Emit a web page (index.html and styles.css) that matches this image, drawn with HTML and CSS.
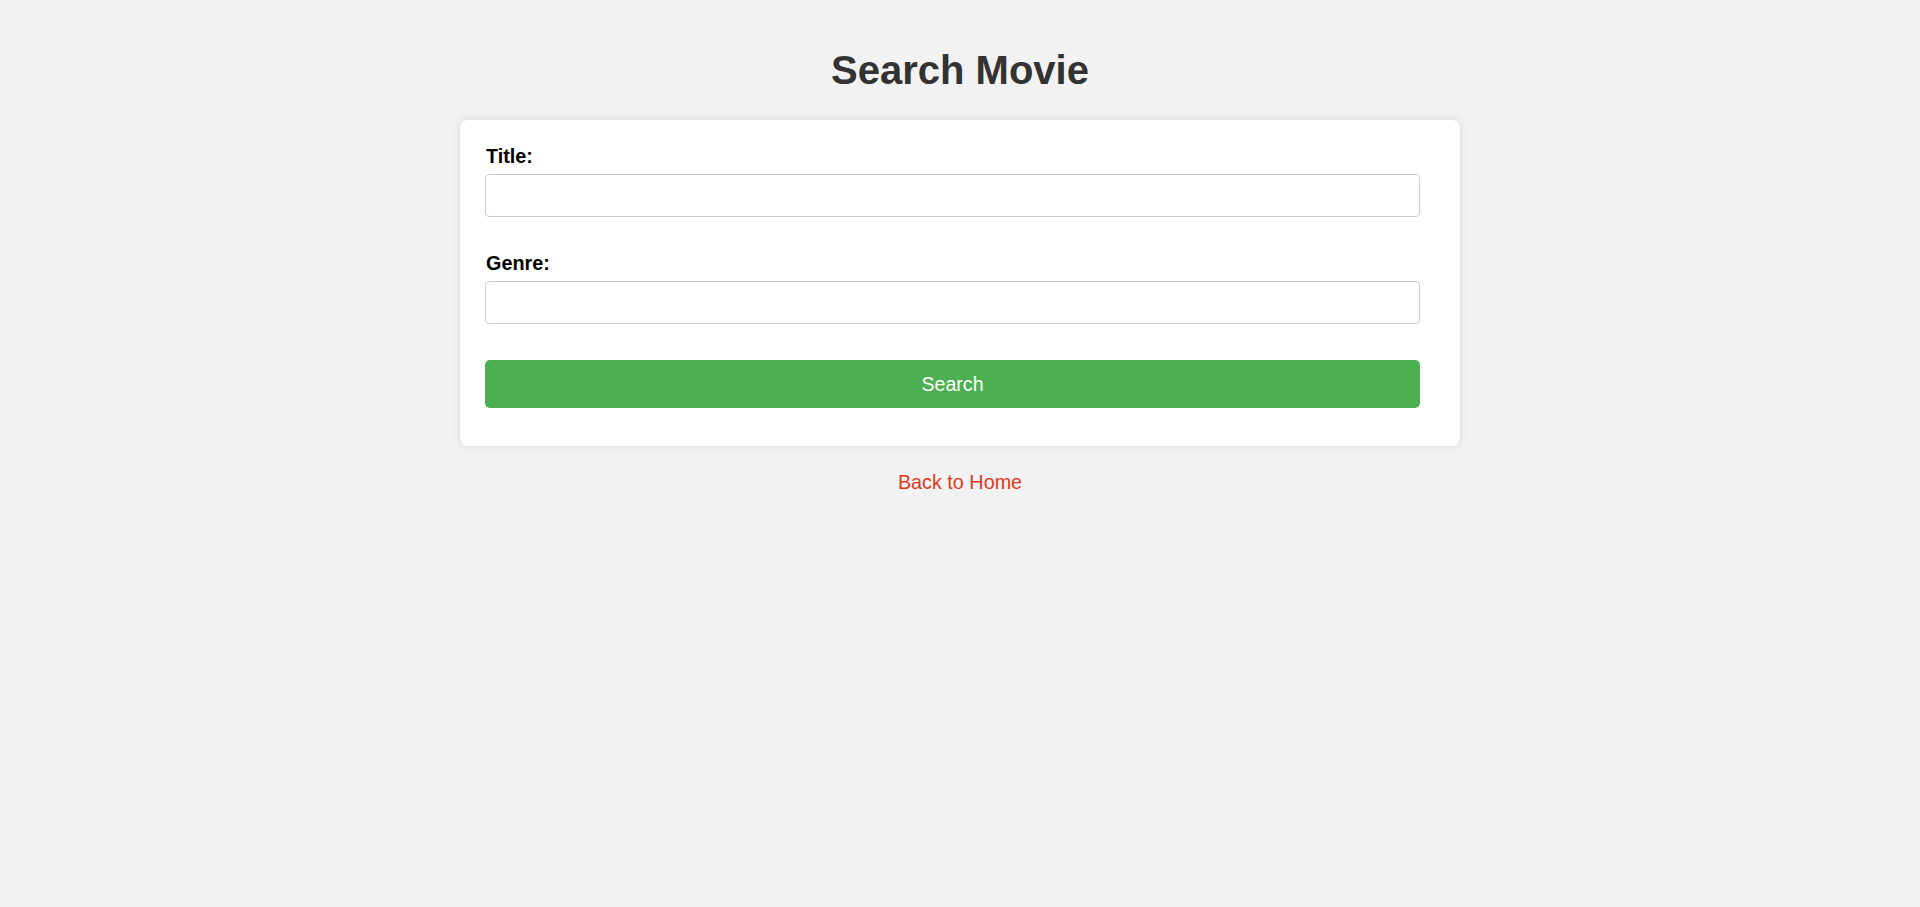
FILE: index.html
```html
<!DOCTYPE html>
<html lang="en">
<head>
<meta charset="utf-8">
<title>Search Movie</title>
<link rel="stylesheet" href="styles.css">
</head>
<body>
<h1 class="page-title">Search Movie</h1>
<div class="card">
  <form class="search-form">
    <div class="field">
      <label class="field-label" for="title">Title:</label>
      <input class="field-input" type="text" id="title" name="title">
    </div>
    <div class="field">
      <label class="field-label" for="genre">Genre:</label>
      <input class="field-input" type="text" id="genre" name="genre">
    </div>
    <button class="search-btn" type="button">Search</button>
  </form>
</div>
<div class="back">
  <a class="back-link" href="#">Back to Home</a>
</div>
</body>
</html>
```

FILE: styles.css
```css
html, body {
  margin: 0;
  padding: 0;
}
body {
  background: #f2f2f2;
  font-family: "Liberation Sans", Arial, sans-serif;
  padding: 20px;
}
.page-title {
  font-size: 40px;
  font-weight: bold;
  color: #333333;
  text-align: center;
  margin: 26.8px 0;
  line-height: 46px;
}
.card {
  box-sizing: border-box;
  width: 1000px;
  margin: 0 auto;
  background: #ffffff;
  border-radius: 8px;
  box-shadow: 0 0 10px rgba(0, 0, 0, 0.1);
  padding: 25px 25px 38px 25px;
}
.search-form {
  display: flex;
  flex-direction: column;
}
.field {
  display: flex;
  flex-direction: column;
  margin-bottom: 35.5px;
}
.field-label {
  font-size: 19.8px;
  font-weight: bold;
  color: #000000;
  line-height: 22px;
  margin-bottom: 7px;
  padding-left: 1px;
}
.field-input {
  box-sizing: border-box;
  width: 935px;
  height: 43px;
  border: 1px solid #cccccc;
  border-radius: 4px;
  padding: 10px;
  font-size: 16px;
  font-family: inherit;
  background: #ffffff;
  margin: 0;
}
.search-btn {
  box-sizing: border-box;
  width: 935px;
  height: 48px;
  border: none;
  border-radius: 5px;
  background: #4caf50;
  color: #ffffff;
  font-size: 19.6px;
  font-family: inherit;
  line-height: 22px;
  padding: 0;
  margin: 0;
  cursor: pointer;
}
.back {
  text-align: center;
  margin-top: 25px;
  line-height: 22px;
}
.back-link {
  font-size: 19.8px;
  color: #dc3a1c;
  text-decoration: none;
}
```
